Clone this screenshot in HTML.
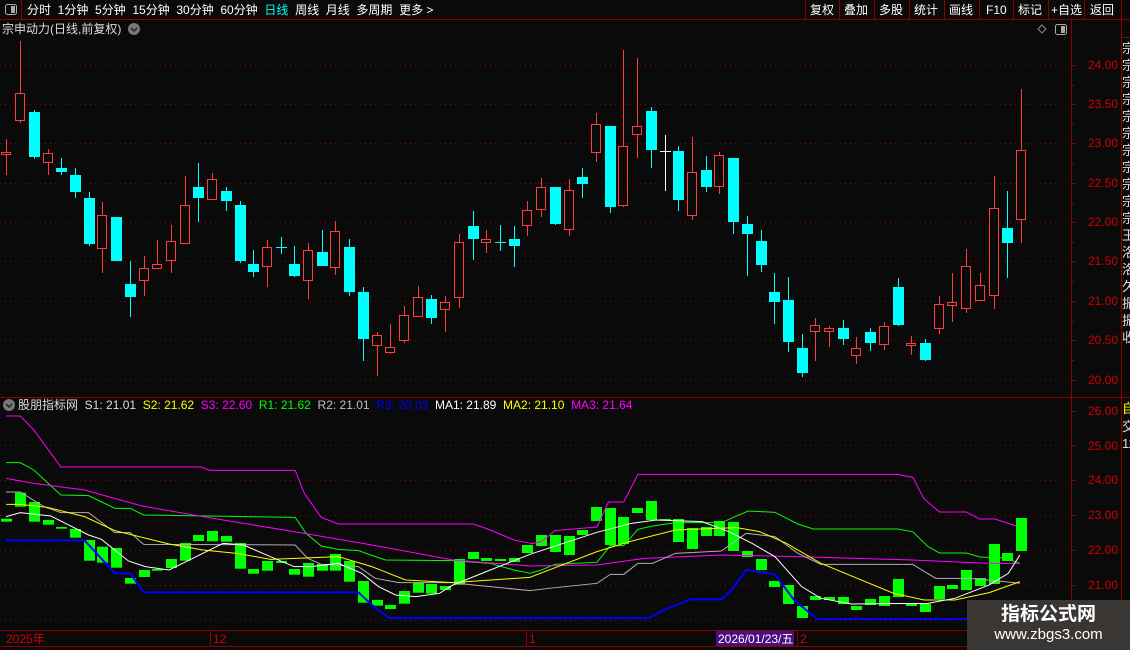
<!DOCTYPE html>
<html><head><meta charset="utf-8"><style>
*{margin:0;padding:0;box-sizing:border-box}
body{width:1130px;height:650px;background:#0a0a0a;overflow:hidden;position:relative;font-family:"Liberation Sans","Noto Sans CJK SC",sans-serif;color:#ddd}
.t{position:absolute;white-space:nowrap;font-size:12px;line-height:14px}
</style></head><body>
<svg width="1130" height="650" style="position:absolute;left:0;top:0" xmlns="http://www.w3.org/2000/svg">
<!-- top bar -->
<rect x="0" y="0" width="1130" height="20" fill="#0a0a0a"/>
<line x1="0" y1="19.5" x2="1130" y2="19.5" stroke="#8b0000"/>
<line x1="21.5" y1="0" x2="21.5" y2="20" stroke="#8b0000"/>
<rect x="5.5" y="4.5" width="11" height="10" rx="2" fill="none" stroke="#aaa"/>
<rect x="11" y="6" width="4" height="7" fill="#aaa"/>
<g stroke="#8b0000">
<line x1="805.5" y1="0" x2="805.5" y2="20"/><line x1="839.5" y1="0" x2="839.5" y2="20"/><line x1="874.5" y1="0" x2="874.5" y2="20"/><line x1="909.5" y1="0" x2="909.5" y2="20"/><line x1="944.5" y1="0" x2="944.5" y2="20"/><line x1="979.5" y1="0" x2="979.5" y2="20"/><line x1="1013.5" y1="0" x2="1013.5" y2="20"/><line x1="1048.5" y1="0" x2="1048.5" y2="20"/><line x1="1084.5" y1="0" x2="1084.5" y2="20"/><line x1="1121.5" y1="0" x2="1121.5" y2="20"/>
</g>
<!-- frame lines -->
<line x1="1071.5" y1="20" x2="1071.5" y2="646" stroke="#8b0000"/>
<line x1="1121.5" y1="20" x2="1121.5" y2="646" stroke="#8b0000"/>
<line x1="0" y1="397.5" x2="1130" y2="397.5" stroke="#8b0000"/>
<line x1="0" y1="630.5" x2="1071" y2="630.5" stroke="#8b0000"/>
<line x1="0" y1="646.5" x2="1130" y2="646.5" stroke="#8b0000"/>
<line x1="1122" y1="37.5" x2="1130" y2="37.5" stroke="#8b0000"/>
<!-- grid -->
<g stroke="#8b0000" stroke-dasharray="1,4">
<line x1="0" y1="65.5" x2="1068" y2="65.5"/><line x1="0" y1="104.5" x2="1068" y2="104.5"/><line x1="0" y1="143.5" x2="1068" y2="143.5"/><line x1="0" y1="183.5" x2="1068" y2="183.5"/><line x1="0" y1="222.5" x2="1068" y2="222.5"/><line x1="0" y1="261.5" x2="1068" y2="261.5"/><line x1="0" y1="301.5" x2="1068" y2="301.5"/><line x1="0" y1="340.5" x2="1068" y2="340.5"/><line x1="0" y1="380.5" x2="1068" y2="380.5"/>
<line x1="0" y1="445.5" x2="1068" y2="445.5"/><line x1="0" y1="480.5" x2="1068" y2="480.5"/><line x1="0" y1="515.5" x2="1068" y2="515.5"/><line x1="0" y1="550.5" x2="1068" y2="550.5"/><line x1="0" y1="585.5" x2="1068" y2="585.5"/><line x1="0" y1="620.5" x2="1068" y2="620.5"/>
</g>
<!-- axis ticks -->
<g stroke="#8b0000">
<line x1="1071" y1="65.5" x2="1076" y2="65.5"/><line x1="1071" y1="104.5" x2="1076" y2="104.5"/><line x1="1071" y1="143.5" x2="1076" y2="143.5"/><line x1="1071" y1="183.5" x2="1076" y2="183.5"/><line x1="1071" y1="222.5" x2="1076" y2="222.5"/><line x1="1071" y1="261.5" x2="1076" y2="261.5"/><line x1="1071" y1="301.5" x2="1076" y2="301.5"/><line x1="1071" y1="340.5" x2="1076" y2="340.5"/><line x1="1071" y1="380.5" x2="1076" y2="380.5"/>
<line x1="1071" y1="85.5" x2="1074" y2="85.5"/><line x1="1071" y1="124.5" x2="1074" y2="124.5"/><line x1="1071" y1="163.5" x2="1074" y2="163.5"/><line x1="1071" y1="203.5" x2="1074" y2="203.5"/><line x1="1071" y1="242.5" x2="1074" y2="242.5"/><line x1="1071" y1="281.5" x2="1074" y2="281.5"/><line x1="1071" y1="321.5" x2="1074" y2="321.5"/><line x1="1071" y1="360.5" x2="1074" y2="360.5"/>
<line x1="1071" y1="411.5" x2="1076" y2="411.5"/><line x1="1071" y1="445.5" x2="1076" y2="445.5"/><line x1="1071" y1="480.5" x2="1076" y2="480.5"/><line x1="1071" y1="515.5" x2="1076" y2="515.5"/><line x1="1071" y1="550.5" x2="1076" y2="550.5"/><line x1="1071" y1="585.5" x2="1076" y2="585.5"/><line x1="1071" y1="620.5" x2="1076" y2="620.5"/>
<line x1="210.5" y1="630" x2="210.5" y2="646"/><line x1="526.5" y1="630" x2="526.5" y2="646"/><line x1="797.5" y1="630" x2="797.5" y2="646"/>
</g>
<!-- candles -->
<g stroke-width="1">
<g stroke="#ff3b3b" fill="#0a0a0a">
<line x1="6.5" y1="139" x2="6.5" y2="175"/><rect x="1.5" y="152.5" width="9" height="2"/>
<line x1="20.5" y1="41" x2="20.5" y2="123"/><rect x="15.5" y="93.5" width="9" height="27"/>
<line x1="48.5" y1="149" x2="48.5" y2="175"/><rect x="43.5" y="153.5" width="9" height="9"/>
<line x1="102.5" y1="202" x2="102.5" y2="273"/><rect x="97.5" y="215.5" width="9" height="33"/>
<line x1="144.5" y1="256" x2="144.5" y2="296"/><rect x="139.5" y="268.5" width="9" height="12"/>
<line x1="157.5" y1="240" x2="157.5" y2="269"/><rect x="152.5" y="264.5" width="9" height="4"/>
<line x1="171.5" y1="225" x2="171.5" y2="273"/><rect x="166.5" y="241.5" width="9" height="19"/>
<line x1="185.5" y1="176" x2="185.5" y2="244"/><rect x="180.5" y="205.5" width="9" height="38"/>
<line x1="212.5" y1="173" x2="212.5" y2="200"/><rect x="207.5" y="179.5" width="9" height="20"/>
<line x1="267.5" y1="240" x2="267.5" y2="287"/><rect x="262.5" y="247.5" width="9" height="19"/>
<line x1="308.5" y1="243" x2="308.5" y2="299"/><rect x="303.5" y="250.5" width="9" height="30"/>
<line x1="335.5" y1="221" x2="335.5" y2="275"/><rect x="330.5" y="231.5" width="9" height="36"/>
<line x1="377.5" y1="332" x2="377.5" y2="376"/><rect x="372.5" y="335.5" width="9" height="10"/>
<line x1="390.5" y1="324" x2="390.5" y2="354"/><rect x="385.5" y="347.5" width="9" height="5"/>
<line x1="404.5" y1="306" x2="404.5" y2="343"/><rect x="399.5" y="315.5" width="9" height="25"/>
<line x1="418.5" y1="286" x2="418.5" y2="317"/><rect x="413.5" y="297.5" width="9" height="19"/>
<line x1="445.5" y1="296" x2="445.5" y2="332"/><rect x="440.5" y="302.5" width="9" height="7"/>
<line x1="459.5" y1="234" x2="459.5" y2="308"/><rect x="454.5" y="242.5" width="9" height="55"/>
<line x1="486.5" y1="230" x2="486.5" y2="253"/><rect x="481.5" y="239.5" width="9" height="3"/>
<line x1="527.5" y1="201" x2="527.5" y2="236"/><rect x="522.5" y="210.5" width="9" height="15"/>
<line x1="541.5" y1="178" x2="541.5" y2="217"/><rect x="536.5" y="187.5" width="9" height="22"/>
<line x1="569.5" y1="179" x2="569.5" y2="236"/><rect x="564.5" y="190.5" width="9" height="39"/>
<line x1="596.5" y1="113" x2="596.5" y2="162"/><rect x="591.5" y="124.5" width="9" height="28"/>
<line x1="623.5" y1="50" x2="623.5" y2="207"/><rect x="618.5" y="146.5" width="9" height="59"/>
<line x1="637.5" y1="58" x2="637.5" y2="158"/><rect x="632.5" y="126.5" width="9" height="8"/>
<line x1="692.5" y1="137" x2="692.5" y2="220"/><rect x="687.5" y="172.5" width="9" height="43"/>
<line x1="719.5" y1="152" x2="719.5" y2="194"/><rect x="714.5" y="155.5" width="9" height="31"/>
<line x1="815.5" y1="318" x2="815.5" y2="361"/><rect x="810.5" y="325.5" width="9" height="6"/>
<line x1="829.5" y1="326" x2="829.5" y2="347"/><rect x="824.5" y="328.5" width="9" height="3"/>
<line x1="856.5" y1="337" x2="856.5" y2="364"/><rect x="851.5" y="348.5" width="9" height="7"/>
<line x1="884.5" y1="322" x2="884.5" y2="350"/><rect x="879.5" y="326.5" width="9" height="18"/>
<line x1="911.5" y1="336" x2="911.5" y2="355"/><rect x="906.5" y="343.5" width="9" height="2"/>
<line x1="939.5" y1="296" x2="939.5" y2="334"/><rect x="934.5" y="304.5" width="9" height="24"/>
<line x1="952.5" y1="273" x2="952.5" y2="322"/><rect x="947.5" y="302.5" width="9" height="3"/>
<line x1="966.5" y1="249" x2="966.5" y2="313"/><rect x="961.5" y="266.5" width="9" height="42"/>
<line x1="980.5" y1="273" x2="980.5" y2="301"/><rect x="975.5" y="285.5" width="9" height="15"/>
<line x1="994.5" y1="176" x2="994.5" y2="309"/><rect x="989.5" y="208.5" width="9" height="87"/>
<line x1="1021.5" y1="89" x2="1021.5" y2="243"/><rect x="1016.5" y="150.5" width="9" height="69"/>
</g>
<g stroke="#00ffff" fill="#00ffff">
<line x1="34.5" y1="110" x2="34.5" y2="159"/><rect x="29" y="112" width="11" height="45" stroke="none"/>
<line x1="61.5" y1="158" x2="61.5" y2="175"/><rect x="56" y="168" width="11" height="4" stroke="none"/>
<line x1="75.5" y1="168" x2="75.5" y2="198"/><rect x="70" y="175" width="11" height="17" stroke="none"/>
<line x1="89.5" y1="192" x2="89.5" y2="246"/><rect x="84" y="198" width="11" height="46" stroke="none"/>
<rect x="111" y="217" width="11" height="44" stroke="none"/>
<line x1="130.5" y1="261" x2="130.5" y2="317"/><rect x="125" y="284" width="11" height="13" stroke="none"/>
<line x1="198.5" y1="163" x2="198.5" y2="222"/><rect x="193" y="187" width="11" height="11" stroke="none"/>
<line x1="226.5" y1="187" x2="226.5" y2="211"/><rect x="221" y="191" width="11" height="10" stroke="none"/>
<line x1="240.5" y1="201" x2="240.5" y2="263"/><rect x="235" y="205" width="11" height="56" stroke="none"/>
<line x1="253.5" y1="250" x2="253.5" y2="277"/><rect x="248" y="264" width="11" height="8" stroke="none"/>
<line x1="281.5" y1="237" x2="281.5" y2="254"/><rect x="276" y="247" width="11" height="1" stroke="none"/>
<line x1="294.5" y1="246" x2="294.5" y2="277"/><rect x="289" y="264" width="11" height="12" stroke="none"/>
<rect x="317" y="252" width="11" height="14" stroke="none"/><line x1="322.5" y1="230" x2="322.5" y2="266"/>
<line x1="349.5" y1="239" x2="349.5" y2="296"/><rect x="344" y="247" width="11" height="45" stroke="none"/>
<line x1="363.5" y1="287" x2="363.5" y2="361"/><rect x="358" y="292" width="11" height="47" stroke="none"/>
<line x1="431.5" y1="295" x2="431.5" y2="324"/><rect x="426" y="299" width="11" height="19" stroke="none"/>
<line x1="473.5" y1="211" x2="473.5" y2="260"/><rect x="468" y="226" width="11" height="13" stroke="none"/>
<line x1="500.5" y1="225" x2="500.5" y2="251"/><rect x="495" y="242" width="11" height="1" stroke="none"/>
<line x1="514.5" y1="226" x2="514.5" y2="267"/><rect x="509" y="239" width="11" height="7" stroke="none"/>
<line x1="555.5" y1="187" x2="555.5" y2="225"/><rect x="550" y="187" width="11" height="37" stroke="none"/>
<line x1="582.5" y1="168" x2="582.5" y2="198"/><rect x="577" y="177" width="11" height="7" stroke="none"/>
<line x1="610.5" y1="126" x2="610.5" y2="213"/><rect x="605" y="126" width="11" height="81" stroke="none"/>
<line x1="651.5" y1="107" x2="651.5" y2="168"/><rect x="646" y="111" width="11" height="39" stroke="none"/>
<line x1="678.5" y1="146" x2="678.5" y2="211"/><rect x="673" y="151" width="11" height="49" stroke="none"/>
<line x1="706.5" y1="156" x2="706.5" y2="192"/><rect x="701" y="170" width="11" height="17" stroke="none"/>
<line x1="733.5" y1="158" x2="733.5" y2="234"/><rect x="728" y="158" width="11" height="64" stroke="none"/>
<line x1="747.5" y1="216" x2="747.5" y2="276"/><rect x="742" y="224" width="11" height="10" stroke="none"/>
<line x1="761.5" y1="230" x2="761.5" y2="272"/><rect x="756" y="241" width="11" height="24" stroke="none"/>
<line x1="774.5" y1="273" x2="774.5" y2="324"/><rect x="769" y="292" width="11" height="10" stroke="none"/>
<line x1="788.5" y1="277" x2="788.5" y2="352"/><rect x="783" y="300" width="11" height="42" stroke="none"/>
<line x1="802.5" y1="334" x2="802.5" y2="377"/><rect x="797" y="348" width="11" height="25" stroke="none"/>
<line x1="843.5" y1="320" x2="843.5" y2="345"/><rect x="838" y="328" width="11" height="11" stroke="none"/>
<line x1="870.5" y1="328" x2="870.5" y2="351"/><rect x="865" y="332" width="11" height="11" stroke="none"/>
<line x1="898.5" y1="278" x2="898.5" y2="326"/><rect x="893" y="287" width="11" height="38" stroke="none"/>
<line x1="925.5" y1="339" x2="925.5" y2="361"/><rect x="920" y="343" width="11" height="17" stroke="none"/>
<line x1="1007.5" y1="191" x2="1007.5" y2="278"/><rect x="1002" y="228" width="11" height="15" stroke="none"/>
</g>
<g stroke="#ffffff"><line x1="665.5" y1="135" x2="665.5" y2="191"/><line x1="660" y1="151.5" x2="671" y2="151.5"/></g>
</g>
<!-- indicator bars -->
<g fill="#00ff00">
<rect x="1" y="518.7" width="11" height="3"/><rect x="15" y="492.7" width="11" height="14"/><rect x="29" y="502" width="11" height="19.7"/><rect x="43" y="520" width="11" height="4.7"/><rect x="56" y="527" width="11" height="1.7"/><rect x="70" y="529" width="11" height="8.7"/><rect x="84" y="540" width="11" height="20.7"/><rect x="97" y="546.7" width="11" height="16"/><rect x="111" y="548" width="11" height="19.7"/><rect x="125" y="578" width="11" height="5.7"/><rect x="139" y="570" width="11" height="7"/><rect x="152" y="569" width="11" height="1.7"/><rect x="166" y="559" width="11" height="9"/><rect x="180" y="543" width="11" height="17.7"/><rect x="193" y="535" width="11" height="6"/><rect x="207" y="531" width="11" height="10.3"/><rect x="221" y="536" width="11" height="5.7"/><rect x="235" y="543" width="11" height="25.7"/><rect x="248" y="569" width="11" height="4.7"/><rect x="262" y="561" width="11" height="9.7"/><rect x="276" y="561" width="11" height="2"/><rect x="289" y="569" width="11" height="5.7"/><rect x="303" y="563" width="11" height="13.7"/><rect x="317" y="564" width="11" height="6.7"/><rect x="330" y="554" width="11" height="16.7"/><rect x="344" y="561" width="11" height="20.7"/><rect x="358" y="581" width="11" height="21.7"/><rect x="372" y="600" width="11" height="5.7"/><rect x="385" y="605" width="11" height="4"/><rect x="399" y="591" width="11" height="12.7"/><rect x="413" y="583" width="11" height="9.7"/><rect x="426" y="584" width="11" height="9.7"/><rect x="440" y="586" width="11" height="4"/><rect x="454" y="559" width="11" height="25.7"/><rect x="468" y="552" width="11" height="7"/><rect x="481" y="558" width="11" height="3"/><rect x="495" y="559" width="11" height="2"/><rect x="509" y="558" width="11" height="4"/><rect x="522" y="545" width="11" height="8"/>
<rect x="536" y="535" width="11" height="11"/><rect x="550" y="535" width="11" height="17"/><rect x="564" y="536" width="11" height="19"/><rect x="577" y="530" width="11" height="5"/><rect x="591" y="507" width="11" height="14"/><rect x="605" y="508" width="11" height="37"/><rect x="618" y="517" width="11" height="27"/><rect x="632" y="508" width="11" height="5"/><rect x="646" y="501" width="11" height="19"/><rect x="660" y="519" width="11" height="1"/><rect x="673" y="519" width="11" height="23"/><rect x="687" y="528" width="11" height="21"/><rect x="701" y="527" width="11" height="9"/><rect x="714" y="521" width="11" height="15"/><rect x="728" y="522" width="11" height="29"/><rect x="742" y="551" width="11" height="6"/><rect x="756" y="559" width="11" height="11"/><rect x="769" y="581" width="11" height="6"/><rect x="783" y="585" width="11" height="19"/><rect x="797" y="606" width="11" height="12"/><rect x="810" y="596" width="11" height="4"/><rect x="824" y="597" width="11" height="3"/><rect x="838" y="597" width="11" height="7"/><rect x="851" y="606" width="11" height="4"/><rect x="865" y="599" width="11" height="6"/><rect x="879" y="596" width="11" height="10"/><rect x="893" y="579" width="11" height="18"/><rect x="906" y="604" width="11" height="2"/><rect x="920" y="604" width="11" height="8"/><rect x="934" y="586" width="11" height="13"/><rect x="947" y="585" width="11" height="4"/><rect x="961" y="570" width="11" height="20"/><rect x="975" y="578" width="11" height="8"/><rect x="989" y="544" width="11" height="40"/><rect x="1002" y="553" width="11" height="8"/><rect x="1016" y="518" width="11" height="33"/>
</g>
<!-- indicator lines -->
<g fill="none" stroke-width="1">
<g transform="translate(0,400) scale(0.3381,0.3333)">
<polyline vector-effect="non-scaling-stroke" stroke="#ff00ff" points="18,48 60,48 100,90 180,201 595,201 620,211 873,211 900,280 950,352 1000,372 1400,372 1450,390 1520,420 1568,430"/>
<polyline vector-effect="non-scaling-stroke" stroke="#00ff00" points="18,188 60,188 100,210 180,285 262,287 340,325 385,325 425,345 873,352 905,400 950,438 1000,448 1060,452 1140,480 1340,482 1450,490 1520,510 1568,520"/>
<polyline vector-effect="non-scaling-stroke" stroke="#ff00ff" points="18,235 100,250 250,270 420,318 600,350 900,400 1100,435 1340,480 1568,498"/>
<polyline vector-effect="non-scaling-stroke" stroke="#b0b0b0" points="18,276 60,276 130,320 180,338 262,338 340,398 385,398 425,433 873,435 910,475 950,493 1060,500 1110,535 1180,548 1340,548 1400,555 1568,572"/>
<polyline vector-effect="non-scaling-stroke" stroke="#ffff00" points="18,313 60,313 140,322 250,350 340,392 500,432 600,450 700,460 800,478 1000,470 1100,500 1200,540 1340,548 1568,532"/>
<polyline vector-effect="non-scaling-stroke" stroke="#ffffff" points="18,350 60,338 150,348 262,405 300,418 380,483 430,500 500,510 580,470 660,430 720,435 800,470 870,500 920,500 1000,490 1070,520 1120,560 1170,585 1230,590 1300,580 1340,555 1450,510 1568,463"/>
<polyline vector-effect="non-scaling-stroke" stroke="#0000ff" stroke-width="2" points="18,421 250,421 340,520 385,520 425,577 1060,577 1100,615 1150,654 1568,654"/>
</g>
<g transform="translate(530,400) scale(0.3827,0.3333)">
<polyline vector-effect="non-scaling-stroke" stroke="#ff00ff" points="0,432 30,425 65,392 175,381 205,306 245,306 282,223 960,223 1000,232 1030,297 1070,336 1140,336 1175,357 1215,357 1270,378"/>
<polyline vector-effect="non-scaling-stroke" stroke="#00ff00" points="0,520 30,510 65,493 175,487 210,437 245,437 282,388 320,378 380,368 500,368 570,333 640,337 700,372 740,387 960,387 1000,395 1040,440 1070,459 1140,459 1175,471 1240,474 1280,490"/>
<polyline vector-effect="non-scaling-stroke" stroke="#ff00ff" points="0,498 175,495 300,475 500,465 700,470 1000,480 1200,490 1280,490"/>
<polyline vector-effect="non-scaling-stroke" stroke="#b0b0b0" points="0,572 50,565 175,550 210,523 245,523 282,490 320,490 380,460 500,453 565,400 640,410 700,460 760,493 1000,493 1060,535 1150,535 1240,545 1280,550"/>
<polyline vector-effect="non-scaling-stroke" stroke="#ffff00" points="0,532 175,455 260,425 380,390 540,383 600,395 670,430 760,490 950,580 1030,600 1110,600 1200,578 1280,545"/>
<polyline vector-effect="non-scaling-stroke" stroke="#ffffff" points="0,463 175,397 265,370 330,360 450,365 520,395 580,430 640,470 710,560 760,595 840,612 1040,610 1110,595 1200,555 1250,520 1280,465"/>
<polyline vector-effect="non-scaling-stroke" stroke="#0000ff" stroke-width="2" points="0,654 310,654 360,625 420,598 500,598 530,565 565,510 640,523 690,600 750,657 1280,657"/>
</g>
</g>
<!-- title icons -->
<circle cx="134" cy="29" r="6" fill="#777"/><path d="M131 28 L134 31 L137 28" stroke="#222" stroke-width="1.5" fill="none"/>
<circle cx="9" cy="405" r="6" fill="#777"/><path d="M6 404 L9 407 L12 404" stroke="#222" stroke-width="1.5" fill="none"/>
<path d="M1042 25 L1046 29 L1042 33 L1038 29 Z" fill="none" stroke="#888"/>
<rect x="1055.5" y="24.5" width="11" height="10" rx="2" fill="none" stroke="#aaa"/><rect x="1061" y="26" width="4" height="7" fill="#aaa"/>
<!-- date box -->
<rect x="716" y="631" width="78" height="15" fill="#4a1080"/>
<!-- watermark -->
<rect x="967" y="600" width="163" height="50" fill="#3a3634"/>
</svg>
<div class="t" style="left:27px;top:3px;color:#fff">分时&nbsp;&nbsp;1分钟&nbsp;&nbsp;5分钟&nbsp;&nbsp;15分钟&nbsp;&nbsp;30分钟&nbsp;&nbsp;60分钟&nbsp;&nbsp;<span style="color:#00ffff">日线</span>&nbsp;&nbsp;周线&nbsp;&nbsp;月线&nbsp;&nbsp;多周期&nbsp;&nbsp;更多 &gt;</div>
<div class="t" style="left:810px;top:3px;color:#fff;word-spacing:0">复权</div>
<div class="t" style="left:844px;top:3px;color:#fff">叠加</div>
<div class="t" style="left:879px;top:3px;color:#fff">多股</div>
<div class="t" style="left:914px;top:3px;color:#fff">统计</div>
<div class="t" style="left:949px;top:3px;color:#fff">画线</div>
<div class="t" style="left:986px;top:3px;color:#fff">F10</div>
<div class="t" style="left:1018px;top:3px;color:#fff">标记</div>
<div class="t" style="left:1051px;top:3px;color:#fff">+自选</div>
<div class="t" style="left:1090px;top:3px;color:#fff">返回</div>
<div class="t" style="left:2px;top:22px;color:#ddd">宗申动力(日线,前复权)</div>
<div class="t" style="left:18px;top:398px;color:#ddd">股朋指标网&nbsp; S1: 21.01&nbsp; <span style="color:#ffff00">S2: 21.62</span>&nbsp; <span style="color:#ff00ff">S3: 22.60</span>&nbsp; <span style="color:#00ff00">R1: 21.62</span>&nbsp; <span style="color:#c0c0c0">R2: 21.01</span>&nbsp; <span style="color:#0000ff">R3: 20.03</span>&nbsp; <span style="color:#fff">MA1: 21.89</span>&nbsp; <span style="color:#ffff00">MA2: 21.10</span>&nbsp; <span style="color:#ff00ff">MA3: 21.64</span></div>
<div style="position:absolute;left:1080px;top:0;width:38px;color:#d00000;font-size:12px;text-align:right">
<div class="t" style="right:0;top:58px">24.00</div><div class="t" style="right:0;top:97px">23.50</div><div class="t" style="right:0;top:136px">23.00</div><div class="t" style="right:0;top:176px">22.50</div><div class="t" style="right:0;top:215px">22.00</div><div class="t" style="right:0;top:254px">21.50</div><div class="t" style="right:0;top:294px">21.00</div><div class="t" style="right:0;top:333px">20.50</div><div class="t" style="right:0;top:373px">20.00</div>
<div class="t" style="right:0;top:404px">26.00</div><div class="t" style="right:0;top:439px">25.00</div><div class="t" style="right:0;top:473px">24.00</div><div class="t" style="right:0;top:508px">23.00</div><div class="t" style="right:0;top:543px">22.00</div><div class="t" style="right:0;top:578px">21.00</div>
</div>
<div class="t" style="left:1122px;top:40px;width:8px;overflow:hidden;color:#ddd;line-height:17px;white-space:normal;font-size:13px">宗宗宗宗宗宗宗宗宗宗宗王洛洛久振振收</div>
<div class="t" style="left:1122px;top:400px;width:8px;overflow:hidden;color:#ddd;line-height:17.5px;white-space:normal;font-size:13px"><span style="color:#ffff00">自</span>交1111111111</div>
<div class="t" style="left:6px;top:632px;color:#d00000">2025年</div>
<div class="t" style="left:213px;top:632px;color:#d00000">12</div>
<div class="t" style="left:529px;top:632px;color:#d00000">1</div>
<div class="t" style="left:718px;top:632px;color:#fff">2026/01/23/五</div>
<div class="t" style="left:800px;top:632px;color:#d00000">2</div>
<div class="t" style="left:967px;top:604px;width:163px;text-align:center;color:#fff;font-size:19px;line-height:22px;font-weight:bold">指标公式网</div>
<div class="t" style="left:967px;top:626px;width:163px;text-align:center;color:#fff;font-size:15px;line-height:18px">www.zbgs3.com</div>
</body></html>
